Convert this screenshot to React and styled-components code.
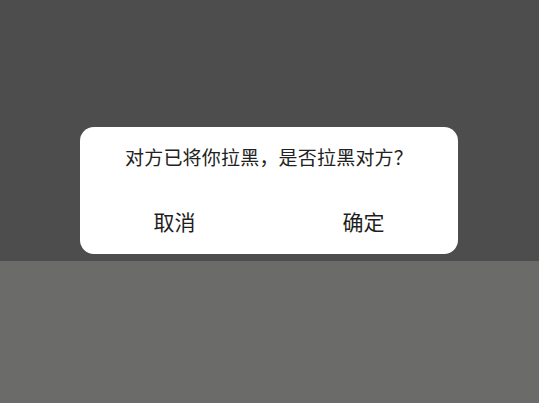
import React from "react";
import styled, { createGlobalStyle } from "styled-components";

const Global = createGlobalStyle`
  html, body { margin: 0; padding: 0; height: 100%; }
  body {
    font-family: "Noto Sans CJK SC", "Noto Sans", sans-serif;
    background: #6b6b69;
  }
  #root { height: 100%; }
`;

const Page = styled.div`
  height: 100%;
  display: flex;
  flex-direction: column;
`;

const Overlay = styled.div`
  height: 261px;
  box-sizing: border-box;
  padding-top: 127px;
  background: #4d4d4d;
  display: flex;
  justify-content: center;
  align-items: flex-start;
`;

const Lower = styled.div`
  flex: 1;
  background: #6b6b69;
`;

const Dialog = styled.div`
  width: 378px;
  height: 127px;
  margin-left: -1px;
  box-sizing: border-box;
  background: #ffffff;
  border-radius: 14px;
  display: flex;
  flex-direction: column;
  padding-top: 17px;
`;

const Message = styled.div`
  text-align: center;
  font-size: 19px;
  line-height: 26px;
  color: #222222;
  letter-spacing: 0.2px;
`;

const Actions = styled.div`
  margin-top: 23px;
  height: 56px;
  display: grid;
  grid-template-columns: 1fr 1fr;
`;

const Action = styled.button`
  border: none;
  background: transparent;
  padding: 0;
  font-family: inherit;
  font-size: 21px;
  line-height: 56px;
  color: #1e1e1e;
  cursor: pointer;
  text-align: center;
`;

export default function App() {
  return (
    <>
      <Global />
      <Page>
        <Overlay>
          <Dialog>
            <Message>对方已将你拉黑，是否拉黑对方？</Message>
            <Actions>
              <Action>取消</Action>
              <Action>确定</Action>
            </Actions>
          </Dialog>
        </Overlay>
        <Lower />
      </Page>
    </>
  );
}
